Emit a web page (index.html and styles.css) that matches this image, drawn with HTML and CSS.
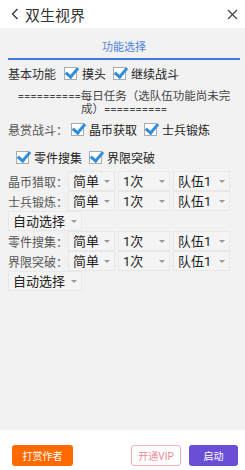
FILE: index.html
```html
<!DOCTYPE html>
<html>
<head>
    <title>双生视界</title>
    <meta name="viewport" content="width=device-width, initial-scale=1.0">
    <link rel="stylesheet" href="styles.css">
</head>
<body>
    <div class="header">
        <svg class="back" width="8" height="12" viewBox="0 0 8 12"><path d="M6.5 1 L1.5 6 L6.5 11" fill="none" stroke="#333" stroke-width="1.3"/></svg>
        <span class="title">双生视界</span>
        <svg class="close" width="11" height="11" viewBox="0 0 11 11"><path d="M1 1 L10 10 M10 1 L1 10" fill="none" stroke="#444" stroke-width="1.2"/></svg>
    </div>

    <div class="main">
        <div class="tab">功能选择</div>

        <div class="row checks">
            <span class="label">基本功能</span>
            <span class="check"><i class="box"></i>摸头</span>
            <span class="check"><i class="box"></i>继续战斗</span>
        </div>

        <div class="notice">
            <div>==========每日任务（选队伍功能尚未完</div>
            <div>成）==========</div>
        </div>

        <div class="row checks">
            <span class="label gray">悬赏战斗：</span>
            <span class="check"><i class="box"></i>晶币获取</span>
            <span class="check"><i class="box"></i>士兵锻炼</span>
        </div>
        <div class="row checks indent">
            <span class="check"><i class="box"></i>零件搜集</span>
            <span class="check"><i class="box"></i>界限突破</span>
        </div>

        <div class="row">
            <span class="label gray">晶币猎取：</span>
            <span class="spin w1">简单</span>
            <span class="spin w2">1次</span>
            <span class="spin w3">队伍1</span>
        </div>
        <div class="row">
            <span class="label gray">士兵锻炼：</span>
            <span class="spin w1">简单</span>
            <span class="spin w2">1次</span>
            <span class="spin w3">队伍1</span>
        </div>
        <div class="row">
            <span class="spin w4">自动选择</span>
        </div>
        <div class="row">
            <span class="label gray">零件搜集：</span>
            <span class="spin w1">简单</span>
            <span class="spin w2">1次</span>
            <span class="spin w3">队伍1</span>
        </div>
        <div class="row">
            <span class="label gray">界限突破：</span>
            <span class="spin w1">简单</span>
            <span class="spin w2">1次</span>
            <span class="spin w3">队伍1</span>
        </div>
        <div class="row">
            <span class="spin w4">自动选择</span>
        </div>
    </div>

    <div class="footer">
        <button class="btn reward">打赏作者</button>
        <span class="spacer"></span>
        <button class="btn vip">开通VIP</button>
        <button class="btn start">启动</button>
    </div>
</body>
</html>
```
FILE: styles.css
```css
html, body {
    margin: 0;
    padding: 0;
}
body {
    width: 245px;
    height: 470px;
    display: flex;
    flex-direction: column;
    font-family: Roboto, "Noto Sans CJK SC", sans-serif;
    background-color: #fff;
    color: #333;
}
.header {
    height: 28px;
    display: flex;
    align-items: center;
    padding: 0 7px 0 11px;
    flex-shrink: 0;
}
.back {
    margin-right: 6px;
}
.title {
    font-size: 15px;
    color: #333;
    flex: 1;
}
.main {
    flex: 1;
    background-color: #f2f2f2;
    padding: 0 5px 0 8px;
}
.tab {
    margin-top: 11px;
    text-align: center;
    font-size: 11px;
    color: #4d85d9;
    line-height: 18px;
    padding-bottom: 1px;
    border-bottom: 2px solid #3f7be0;
}
.row {
    display: flex;
    align-items: center;
    height: 20px;
    font-size: 12px;
}
.row.checks {
    height: 26px;
}
.row.indent {
    margin-top: 2px;
    margin-bottom: 1px;
    padding-left: 5px;
}
.label {
    color: #333;
    margin-right: 5px;
}
.label.gray {
    color: #555;
    margin-right: 0;
}
.check {
    display: flex;
    align-items: center;
    color: #222;
    margin-left: 3px;
    margin-right: 4px;
}
.box {
    width: 11px;
    height: 11px;
    border: 1px solid #aaa;
    background: #fff;
    margin-right: 5px;
    position: relative;
}
.box::after {
    content: "";
    position: absolute;
    left: 3px;
    top: -3px;
    width: 5px;
    height: 10px;
    border-right: 3px solid #2f8fdc;
    border-bottom: 3px solid #2f8fdc;
    transform: rotate(40deg);
}
.notice {
    text-align: center;
    font-size: 11.5px;
    color: #444;
    line-height: 13px;
    padding: 4px 0 0;
    white-space: nowrap;
}
.spin {
    height: 20px;
    line-height: 20px;
    font-size: 13px;
    color: #222;
    background: #f4f4f4;
    border: 1px solid #e8e8e8;
    padding-left: 4px;
    margin-right: 3px;
    position: relative;
    box-sizing: border-box;
}
.spin::after {
    content: "";
    position: absolute;
    right: 4px;
    top: 8px;
    border-left: 3px solid transparent;
    border-right: 3px solid transparent;
    border-top: 3px solid #999;
}
.w1 { width: 47px; }
.w2 { width: 52px; }
.w3 { width: 57px; }
.w4 { width: 74px; }
.footer {
    height: 40px;
    display: flex;
    align-items: flex-start;
    padding: 15px 7px 0 12px;
    box-sizing: border-box;
    flex-shrink: 0;
}
.spacer {
    flex: 1;
}
.btn {
    height: 21px;
    border-radius: 3px;
    font-size: 10px;
    font-family: inherit;
    padding: 0;
    border: 1px solid transparent;
}
.reward {
    width: 61px;
    background: #ff6a00;
    color: #fff;
}
.vip {
    width: 50px;
    background: #fff;
    color: #e98a96;
    border-color: #efb0b8;
    margin-right: 8px;
}
.start {
    width: 49px;
    background: #6a4fd6;
    color: #fff;
}
```
